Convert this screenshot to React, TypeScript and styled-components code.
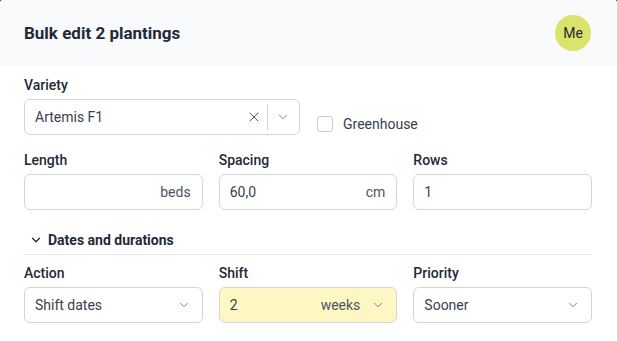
import * as React from "react";
import styled, { createGlobalStyle } from "styled-components";
import { ChevronDown, X } from "lucide-react";

const GlobalStyle = createGlobalStyle`
  html, body {
    margin: 0;
    padding: 0;
    background: #2b2f36;
  }
  body {
    font-family: Roboto, "Liberation Sans", Arial, sans-serif;
    color: #1f2937;
  }
  * { box-sizing: border-box; }
`;

const Dialog = styled.section`
  width: 617px;
  height: 341px;
  background: #ffffff;
  border-radius: 3px 3px 0 0;
  overflow: hidden;
`;

const Header = styled.header`
  display: flex;
  align-items: center;
  justify-content: space-between;
  height: 66px;
  padding: 0 26px 0 24px;
  background: #f8fafc;
`;

const Title = styled.h1`
  margin: 0;
  font-size: 17px;
  font-weight: 700;
  color: #1f2937;
`;

const Avatar = styled.div`
  width: 36px;
  height: 36px;
  border-radius: 50%;
  background: #dbe36d;
  display: flex;
  align-items: center;
  justify-content: center;
  font-size: 14px;
  color: #1f2937;
`;

const Body = styled.div`
  padding: 9px 25px 0 24px;
`;

const Grid = styled.div`
  display: grid;
  grid-template-columns: repeat(6, 1fr);
  column-gap: 16px;
  row-gap: 15px;
`;

const Field = styled.div<{ $span: number }>`
  grid-column: span ${(p) => p.$span};
  display: flex;
  flex-direction: column;
  min-width: 0;
`;

const Label = styled.label`
  font-size: 14px;
  line-height: 20px;
  font-weight: 500;
  color: #1f2937;
  margin-bottom: 4px;
`;

const Control = styled.div<{ $highlight?: boolean }>`
  display: flex;
  align-items: center;
  height: 36px;
  padding: 0 11px 0 10px;
  border: 1px solid #d1d5db;
  border-radius: 6px;
  background: ${(p) => (p.$highlight ? "#fef7c3" : "#ffffff")};
  font-size: 14px;
  color: #374151;
  gap: 8px;
`;

const Value = styled.span`
  flex: 1;
  white-space: nowrap;
`;

const Unit = styled.span<{ $beforeIcon?: boolean }>`
  color: #4b5563;
  margin-right: ${(p) => (p.$beforeIcon ? "3px" : "0")};
`;

const SelectIcons = styled.div`
  display: flex;
  align-items: center;
  align-self: stretch;
  color: #6b7280;
  margin-right: -2px;
`;

const Separator = styled.span`
  width: 1px;
  align-self: stretch;
  margin: 4px 8px 4px 5px;
  background: #d1d5db;
`;

const CheckCell = styled.div`
  grid-column: span 3;
  display: flex;
  align-items: flex-end;
  padding-bottom: 1px;
  padding-left: 1px;
  gap: 10px;
  font-size: 14px;
  line-height: 20px;
  color: #374151;
`;

const Checkbox = styled.span`
  width: 16px;
  height: 16px;
  margin-bottom: 2px;
  border: 1px solid #c7ccd3;
  border-radius: 3px;
  background: #ffffff;
`;

const SectionHeading = styled.div`
  margin-top: 20px;
  padding: 0 0 4px 5px;
  border-bottom: 1px solid #e5e7eb;
  display: flex;
  align-items: center;
  gap: 5px;
  font-size: 14px;
  line-height: 20px;
  font-weight: 700;
  color: #1f2937;
`;

const SectionGrid = styled(Grid)`
  margin-top: 8px;
`;

const SmallChevron = styled(ChevronDown)`
  flex-shrink: 0;
  color: #6b7280;
`;

type SelectProps = {
  value: string;
  unit?: string;
  highlight?: boolean;
};

const Select = ({ value, unit, highlight }: SelectProps) => (
  <Control $highlight={highlight}>
    <Value>{value}</Value>
    {unit ? <Unit $beforeIcon>{unit}</Unit> : null}
    <SmallChevron size={14} strokeWidth={1.5} />
  </Control>
);

type InputProps = { value?: string; unit?: string };

const NumberInput = ({ value = "", unit }: InputProps) => (
  <Control>
    <Value>{value}</Value>
    {unit ? <Unit>{unit}</Unit> : null}
  </Control>
);

export default function App() {
  return (
    <>
      <GlobalStyle />
      <Dialog>
        <Header>
          <Title>Bulk edit 2 plantings</Title>
          <Avatar>Me</Avatar>
        </Header>
        <Body>
          <Grid>
            <Field $span={3}>
              <Label>Variety</Label>
              <Control>
                <Value>Artemis F1</Value>
                <SelectIcons>
                  <X size={16} strokeWidth={1.5} color="#4b5563" />
                  <Separator />
                  <ChevronDown size={14} strokeWidth={1.5} />
                </SelectIcons>
              </Control>
            </Field>
            <CheckCell>
              <Checkbox />
              <span>Greenhouse</span>
            </CheckCell>
            <Field $span={2}>
              <Label>Length</Label>
              <NumberInput unit="beds" />
            </Field>
            <Field $span={2}>
              <Label>Spacing</Label>
              <NumberInput value="60,0" unit="cm" />
            </Field>
            <Field $span={2}>
              <Label>Rows</Label>
              <NumberInput value="1" />
            </Field>
          </Grid>
          <SectionHeading>
            <ChevronDown size={14} strokeWidth={2.2} />
            Dates and durations
          </SectionHeading>
          <SectionGrid>
            <Field $span={2}>
              <Label>Action</Label>
              <Select value="Shift dates" />
            </Field>
            <Field $span={2}>
              <Label>Shift</Label>
              <Select value="2" unit="weeks" highlight />
            </Field>
            <Field $span={2}>
              <Label>Priority</Label>
              <Select value="Sooner" />
            </Field>
          </SectionGrid>
        </Body>
      </Dialog>
    </>
  );
}
